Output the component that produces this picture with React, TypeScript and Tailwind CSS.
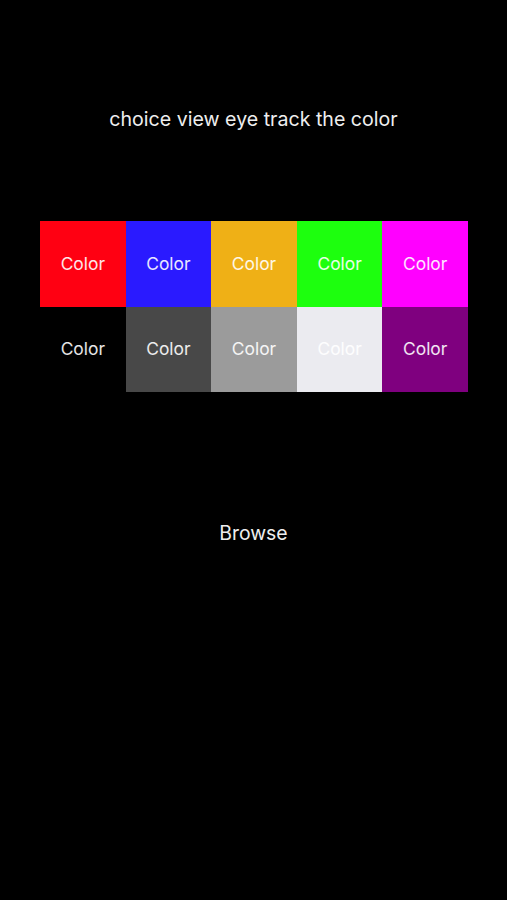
import React from 'react';

const swatches = [
  'bg-[#ff0012]',
  'bg-[#2a1aff]',
  'bg-[#efb016]',
  'bg-[#1dff0e]',
  'bg-[#ff00ff]',
  'bg-black',
  'bg-[#484848]',
  'bg-[#9b9b9b]',
  'bg-[#ebebf0]',
  'bg-[#7f007f]',
];

const App: React.FC = () => {
  return (
    <div className="w-[507px] h-[900px] bg-black text-[#eeeeee] font-['Inter',sans-serif] flex flex-col items-center">
      <h1 className="mt-[106px] h-[26px] text-[19.6px] leading-[26px] font-normal">choice view eye track the color</h1>

      <div className="mt-[89px] ml-[1px] w-[428px] grid grid-cols-5">
        {swatches.map((bg, i) => (
          <div key={i} className={`${bg} h-[85.5px] flex items-center justify-center text-[17.4px] text-white/90`}>
            Color
          </div>
        ))}
      </div>

      <button className="mt-[128px] h-[26px] text-[19.4px] leading-[26px] text-[#eeeeee]">Browse</button>
    </div>
  );
};

export default App;
